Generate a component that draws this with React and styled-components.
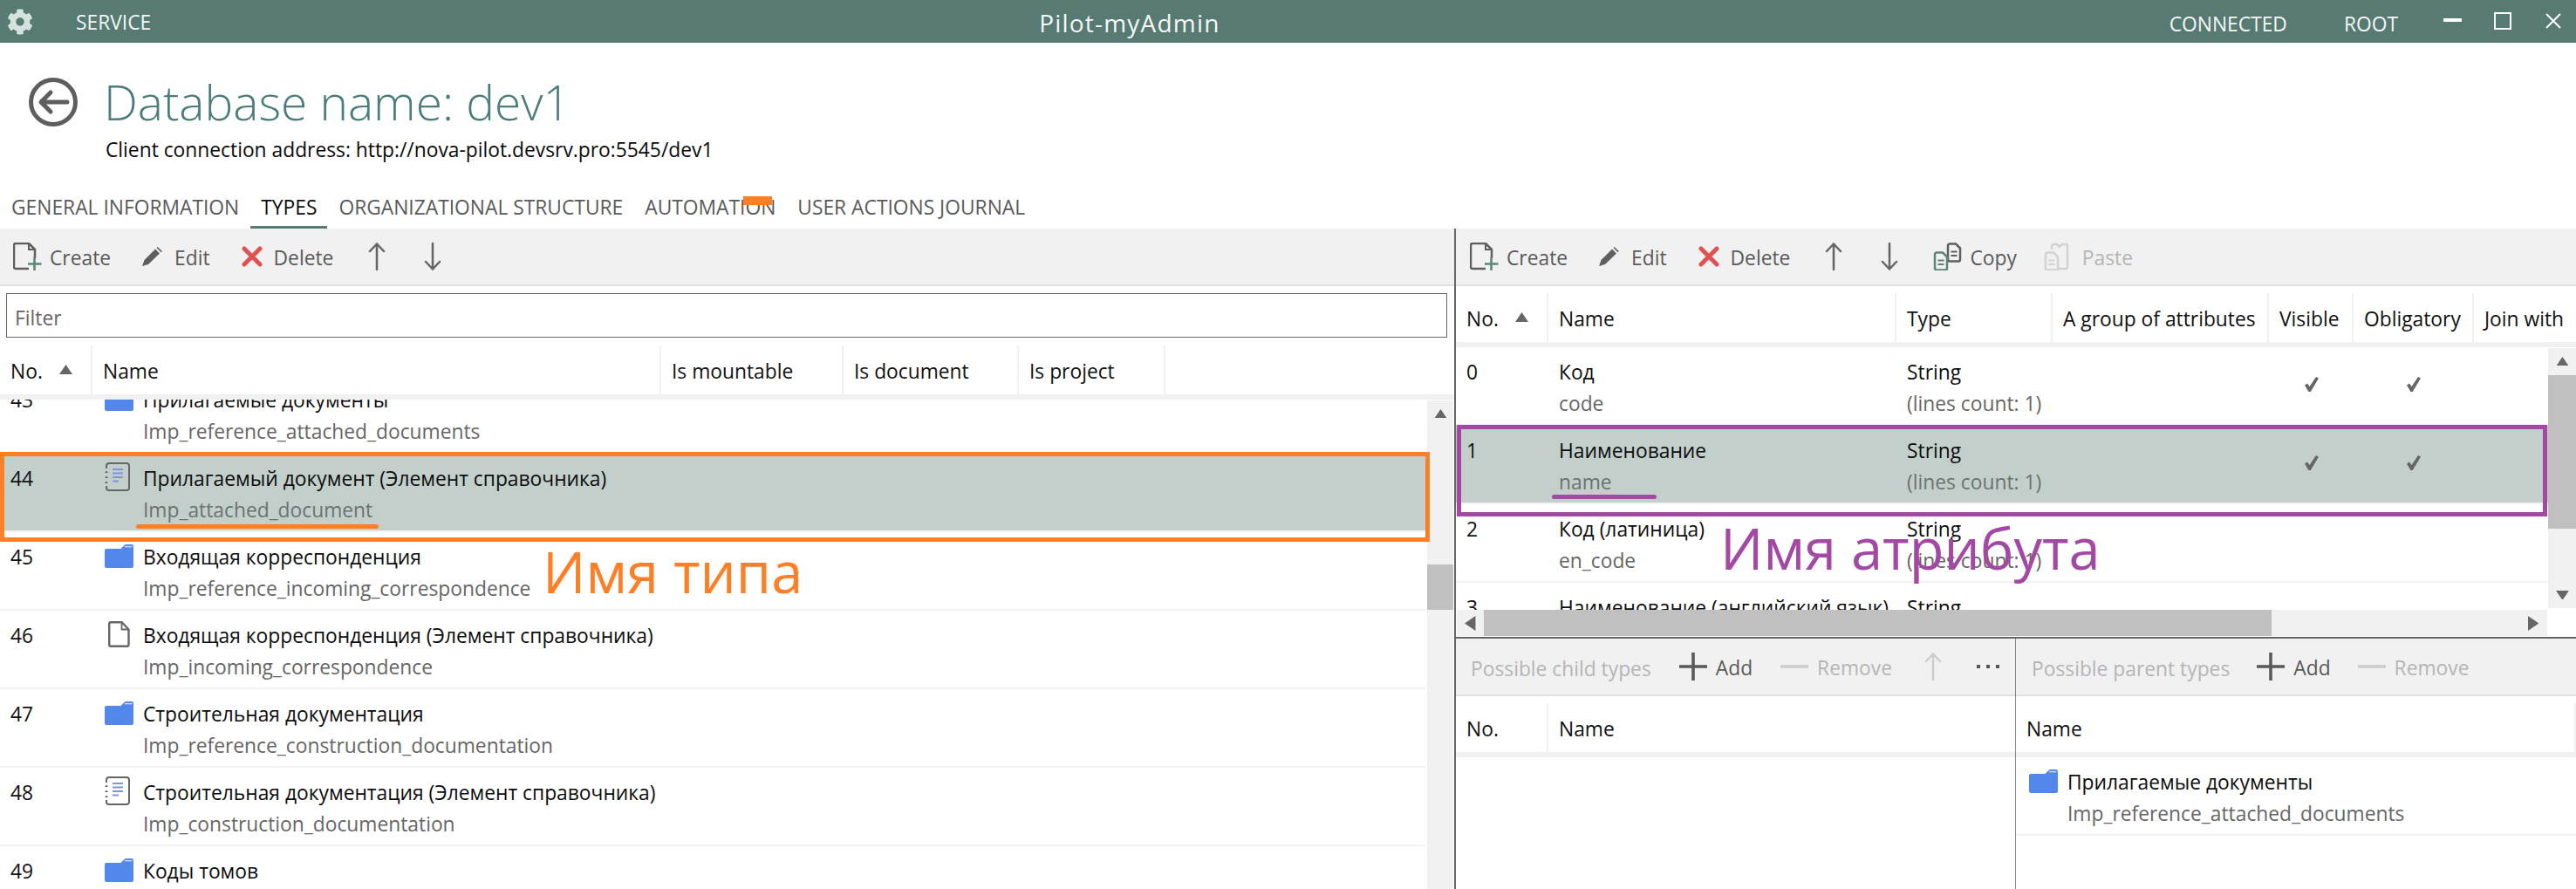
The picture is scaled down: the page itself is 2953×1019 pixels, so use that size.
import React from 'react';
import styled, { createGlobalStyle } from 'styled-components';
import { FaCog } from 'react-icons/fa';

const FONT = `"Open Sans", "Noto Sans", sans-serif`;
const GREEN = '#577b72';
const STRIP = '#f1f1f1';
const HILITE = '#c2cfcb';

const Global = createGlobalStyle`
  html, body { margin: 0; padding: 0; background: #fff; }
  body { font-family: ${FONT}; font-size: 22.8px; color: #111; overflow: hidden; }
  * { box-sizing: border-box; }
`;

const Page = styled.div`position: relative; width: 2953px; height: 1019px; overflow: hidden; display: flex; flex-direction: column;`;

const TitleBar = styled.header`
  height: 49px; flex: none; background: ${GREEN}; color: #fff; display: flex; align-items: center; padding-left: 8px;
`;
const BarText = styled.span`line-height: 30px; margin-left: ${p => p.$ml || 0}px; padding-top: ${p => p.$pt || 0}px; color: #f4f7f6; white-space: nowrap;`;
const AppName = styled(BarText)`font-size: 28px; letter-spacing: 1.2px;`;
const RightGroup = styled.div`margin-left: auto; display: flex; align-items: center;`;
const WinBox = styled.span`width: 20px; height: 20px; border: 2.5px solid #fff; margin-left: 37px; margin-top: -2px;`;
const WinMin = styled.span`width: 21px; height: 4px; background: #fff; margin-left: 52px; margin-top: -4px;`;
const WinClose = styled.svg`width: 18px; height: 18px; margin-left: 39px; margin-right: 17px; margin-top: -2px;`;

const TitleRow = styled.div`display: flex; align-items: center; gap: 30px; height: 56px; margin: 40px 0 0 33px; flex: none;`;
const Title = styled.h1`margin: 0; font: 300 55px/56px ${FONT}; color: #4a7d7b; white-space: nowrap;`;
const Address = styled.div`margin: 12px 0 0 121px; line-height: 30px; color: #0a0a0a; flex: none;`;

const Tabs = styled.nav`display: flex; gap: 1px; height: 50px; margin-top: 25px; padding-left: 1px; flex: none;`;
const Tab = styled.div`
  padding: 11px 12px 0; line-height: 30px; height: 50px; white-space: nowrap;
  color: ${p => (p.$active ? '#0c0c0c' : '#5a5a5a')};
  border-bottom: 3px solid ${p => (p.$active ? GREEN : 'transparent')};
`;

const Main = styled.main`flex: 1; display: flex; min-height: 0;`;
const LeftPane = styled.section`width: 1669px; flex: none; border-right: 2px solid #666; display: flex; flex-direction: column; min-height: 0;`;
const RightPane = styled.section`flex: 1; display: flex; flex-direction: column; min-width: 0;`;

const Toolbar = styled.div`
  height: 66px; flex: none; background: ${STRIP}; border-bottom: 2px solid #e0e0e0; display: flex; align-items: center; gap: ${p => p.$gap || 36}px;
  padding-left: ${p => p.$pl || 15}px; white-space: nowrap; overflow: hidden;
`;
const ToolButton = styled.div`display: flex; align-items: center; gap: ${p => p.$gap || 9}px; color: ${p => (p.$off ? '#b5b5b5' : '#5a5a5a')}; line-height: 30px;`;
const ToolText = styled.span`padding-top: 4px;`;
const ToolLabel = styled.span`color: #b5b5b5; padding-top: 4px;`;
const IconBox = styled.span`display: flex; align-items: center; width: ${p => p.$w}px; height: 32px; justify-content: ${p => p.$center ? 'center' : 'flex-start'};`;
const PasteSlot = styled(ToolButton)`margin-left: -5px; gap: 12px;`;

const FilterWrap = styled.div`padding: 8px 8px 9px 7px; flex: none;`;
const FilterBox = styled.div`height: 51px; border: 1.5px solid #666; padding: 4px 0 0 9px; line-height: 48px; color: #666;`;

const Grid = styled.div`display: grid; grid-template-columns: ${p => p.$cols};`;
const HeadRow = styled(Grid)`height: 62px; flex: none; border-bottom: 6px solid ${STRIP}; overflow: hidden; background: #fff;`;
const HeadCell = styled.div`
  position: relative; padding: 2px 0 0 12px; line-height: 56px; color: #111; white-space: nowrap; overflow: hidden;
  border-right: 2px solid ${p => (p.$last ? 'transparent' : STRIP)};
`;
const SortMark = styled.svg`position: absolute; left: 68px; top: 22px; width: 15px; height: 11px;`;

const ScrollArea = styled.div`flex: 1; display: flex; min-height: 0;`;
const List = styled.div`flex: 1; overflow: hidden; min-width: 0;`;
const ListInner = styled.div`margin-top: ${p => p.$offset || 0}px;`;
const VScroll = styled.div`
  width: ${p => p.$w}px; flex: none; background: ${STRIP}; display: flex; flex-direction: column; align-items: center;
  margin: ${p => p.$margin || '0'};
`;
const ArrowSlot = styled.div`height: 30px; flex: none; display: flex; align-items: center; justify-content: center; margin-top: ${p => p.$auto ? 'auto' : 0};`;
const VThumb = styled.div`width: 100%; background: #c0c0c0; flex: none;`;

const Row = styled(Grid)`
  height: 90px; border-bottom: 2px solid ${STRIP}; background: ${p => (p.$selected ? HILITE : '#fff')};
`;
const NumCell = styled.div`padding: 14px 0 0 12px; line-height: 30px; color: #111;`;
const TypeCell = styled.div`display: flex; padding: 14px 0 0 15px; min-width: 0; white-space: nowrap;`;
const IconSlot = styled.div`width: 44px; flex: none; height: 30px; display: flex; align-items: flex-start;`;
const Lines = styled.div`padding: ${p => p.$pad || 0}; min-width: 0; white-space: nowrap;`;
const Primary = styled.div`line-height: 30px; color: #0d0d0d;`;
const Secondary = styled.div`line-height: 30px; margin-top: 6px; color: ${p => p.$sel ? '#6b7371' : '#666'};`;
const CheckCell = styled.div`display: flex; align-items: center; justify-content: center; padding-bottom: 4px;`;

const HScroll = styled.div`height: 31px; flex: none; background: #fff; display: flex; padding: 0 33px 1px 1px;`;
const HTrack = styled.div`flex: 1; background: ${STRIP}; display: flex; align-items: center;`;
const HArrow = styled.div`width: 31px; flex: none; display: flex; justify-content: center;`;
const HThumb = styled.div`height: 100%; flex: none; background: #c0c0c0;`;
const HRest = styled.div`flex: 1;`;

const TopPane = styled.div`height: 470px; flex: none; display: flex; flex-direction: column; border-bottom: 2px solid #666;`;
const HeadGap = styled.div`height: 8px; flex: none;`;
const BottomPane = styled.div`flex: 1; display: flex; min-height: 0;`;
const SubPane = styled.div`flex: ${p => p.$flex}; width: ${p => p.$w}px; border-right: ${p => p.$line ? '1px solid #888' : 'none'}; display: flex; flex-direction: column; min-width: 0;`;
const SubHead = styled(HeadRow)``;

const Note = styled.div`
  position: absolute; left: ${p => p.$x}px; top: ${p => p.$y}px; color: ${p => p.$color}; font: 400 65px/90px ${FONT}; white-space: nowrap;
`;
const Frame = styled.div`
  position: absolute; left: ${p => p.$x}px; top: ${p => p.$y}px; width: ${p => p.$w}px; height: ${p => p.$h}px; border: 5px solid ${p => p.$color};
`;
const Stroke = styled.div`
  position: absolute; left: ${p => p.$x}px; top: ${p => p.$y}px; width: ${p => p.$w}px; height: ${p => p.$h}px; border-radius: 3px; background: ${p => p.$color};
`;
const Tag = styled(Stroke)`border-radius: 0;`;

const I = '#5f5f5f';
const DocAdd = () => (
  <svg width="33" height="32" viewBox="0 0 33 32" fill="none">
    <path d="M18 30H3a2 2 0 0 1-2-2V3a2 2 0 0 1 2-2h15l7 7v10" stroke={I} strokeWidth="2.5" strokeLinejoin="round" />
    <path d="M18 1v7h7" stroke={I} strokeWidth="2" fill="none" />
    <path d="M24.5 17v15M17 24.5h15.5" stroke="#5c8578" strokeWidth="2.6" />
  </svg>
);
const Pencil = () => (
  <svg width="24" height="22" viewBox="0 0 24 22"><path d="M0 22l2.5-7L15 2.5 20 7.5 7 20zM16.5 1l1.2-1 5.2 5-1.2 1.3z" fill={I} /></svg>
);
const Cross = () => (
  <svg width="24" height="24" viewBox="0 0 24 24"><path d="M3 3l18 18M21 3L3 21" stroke="#e05252" strokeWidth="5" strokeLinecap="round" /></svg>
);
const ArrowV = ({ down, color = '#666' }) => (
  <svg width="20" height="32" viewBox="0 0 20 32" fill="none" style={{ transform: down ? 'scaleY(-1)' : 'none' }}>
    <path d="M10 31V1.5M2 10L10 1.5 18 10" stroke={color} strokeWidth="2.5" strokeLinecap="round" strokeLinejoin="round" />
  </svg>
);
const MiniDoc = ({ x, y, c }) => (
  <g transform={`translate(${x} ${y})`}>
    <path d="M1.5 3a2 2 0 0 1 2-2h7l5 5v13a2 2 0 0 1-2 2h-10a2 2 0 0 1-2-2z" fill="none" stroke={c} strokeWidth="2.5" strokeLinejoin="round" />
    <path d="M5 10h7M5 14.5h7" stroke={c} strokeWidth="2" />
  </g>
);
const CopyIcon = () => (
  <svg width="33" height="32" viewBox="0 0 33 32">
    <MiniDoc x={15.5} y={0.5} c="#5f5f5f" />
    <MiniDoc x={0.5} y={10.5} c="#5c8578" />
  </svg>
);
const PasteIcon = () => (
  <svg width="32" height="32" viewBox="0 0 32 32" fill="none">
    <path d="M9 8V4a2 2 0 0 1 2-2h4l3 3 3-3h4a2 2 0 0 1 2 2v24a2 2 0 0 1-2 2H15" stroke="#d2d2d2" strokeWidth="2.4" />
    <MiniDoc x={0.5} y={10.5} c="#d2d2d2" />
  </svg>
);
const Plus = () => (
  <svg width="32" height="32" viewBox="0 0 32 32"><path d="M16 0v32M0 16h32" stroke="#5a5a5a" strokeWidth="3.6" /></svg>
);
const Minus = () => (
  <svg width="32" height="32" viewBox="0 0 32 32"><path d="M0 16h32" stroke="#cdcdcd" strokeWidth="3.6" /></svg>
);
const Dots = () => (
  <svg width="26" height="6" viewBox="0 0 26 6"><path d="M0 1h4v4H0zM11 1h4v4h-4zM22 1h4v4h-4z" fill="#555" /></svg>
);
const Tri = ({ d, size = 15 }) => {
  const paths = { up: 'M7.5 0L15 11H0z', down: 'M0 0h15L7.5 11z', left: 'M11 0v15L0 7.5z', right: 'M0 0v15l11-7.5z' };
  const side = d === 'left' || d === 'right';
  return (
    <svg width={side ? size * 0.73 : size} height={side ? size : size * 0.73} viewBox={side ? '0 0 11 15' : '0 0 15 11'}>
      <path d={paths[d]} fill="#666" />
    </svg>
  );
};
const Check = () => (
  <svg width="16" height="17" viewBox="0 0 16 17"><path d="M0 9.5l3-2 2.6 3.6L13 0l3 1.4L6.8 17H4.4z" fill="#666" /></svg>
);
const Folder = () => (
  <svg width="33" height="27" viewBox="0 0 33 27">
    <path d="M0 7a2 2 0 0 1 2-2h16.5l4.2-4.2A2.5 2.5 0 0 1 24.5 0H31a2 2 0 0 1 2 2v23a2 2 0 0 1-2 2H2a2 2 0 0 1-2-2z" fill="#5288ec" />
    <path d="M23 2.6h8.4" stroke="#cfdcf7" strokeWidth="1.4" />
  </svg>
);
const ListDoc = () => (
  <svg width="29" height="33" viewBox="0 0 29 33" fill="none" style={{ marginTop: -4 }}>
    <path d="M2 7V4a3 3 0 0 1 3-3h20a3 3 0 0 1 3 3v25a3 3 0 0 1-3 3H5a3 3 0 0 1-3-3v-2" stroke="#666" strokeWidth="2" />
    <path d="M9 8h12M9 12.5h12M9 17h12M9 21.5h7" stroke="#7f95d6" strokeWidth="2" />
    <path d="M0 12l2-2.5L4 12zM0 18l2-2.5L4 18zM0 24l2-2.5L4 24z" fill="#666" />
  </svg>
);
const PlainDoc = () => (
  <svg width="26" height="30" viewBox="0 0 26 30" fill="none" style={{ marginLeft: 4, marginTop: -2 }}>
    <path d="M3 1.2h12.5l8 8.3V27a1.8 1.8 0 0 1-1.8 1.8H3A1.8 1.8 0 0 1 1.2 27V3A1.8 1.8 0 0 1 3 1.2z" stroke="#666" strokeWidth="2.4" strokeLinejoin="round" />
    <path d="M15.5 1.2v8.3h8" stroke="#666" strokeWidth="1.8" />
  </svg>
);
const ICONS = { folder: Folder, list: ListDoc, doc: PlainDoc };

const TYPE_COLS = '106px 652px 209px 201px 168px 1fr';
const typeHead = ['No.', 'Name', 'Is mountable', 'Is document', 'Is project'];
const typeRows = [
  { n: 43, icon: 'folder', name: 'Прилагаемые документы', sys: 'Imp_reference_attached_documents' },
  { n: 44, icon: 'list', name: 'Прилагаемый документ (Элемент справочника)', sys: 'Imp_attached_document', selected: true },
  { n: 45, icon: 'folder', name: 'Входящая корреспонденция', sys: 'Imp_reference_incoming_correspondence' },
  { n: 46, icon: 'doc', name: 'Входящая корреспонденция (Элемент справочника)', sys: 'Imp_incoming_correspondence' },
  { n: 47, icon: 'folder', name: 'Строительная документация', sys: 'Imp_reference_construction_documentation' },
  { n: 48, icon: 'list', name: 'Строительная документация (Элемент справочника)', sys: 'Imp_construction_documentation' },
  { n: 49, icon: 'folder', name: 'Коды томов', sys: '' },
];

const ATTR_COLS = '106px 399px 179px 248px 97px 138px 1fr';
const attrHead = ['No.', 'Name', 'Type', 'A group of attributes', 'Visible', 'Obligatory', 'Join with'];
const attrRows = [
  { n: 0, name: 'Код', sys: 'code', checks: true },
  { n: 1, name: 'Наименование', sys: 'name', checks: true, selected: true },
  { n: 2, name: 'Код (латиница)', sys: 'en_code' },
  { n: 3, name: 'Наименование (английский язык)', sys: 'en_name' },
];

const TopTools = ({ pl, extra }) => (
  <Toolbar $pl={pl}>
    <ToolButton><IconBox $w={33}><DocAdd /></IconBox><ToolText>Create</ToolText></ToolButton>
    <ToolButton><IconBox $w={28}><Pencil /></IconBox><ToolText>Edit</ToolText></ToolButton>
    <ToolButton><IconBox $w={28}><Cross /></IconBox><ToolText>Delete</ToolText></ToolButton>
    <IconBox $w={28} $center><ArrowV /></IconBox>
    <IconBox $w={28} $center><ArrowV down /></IconBox>
    {extra}
  </Toolbar>
);

export default function App() {
  return (
    <Page>
      <Global />
      <TitleBar>
        <FaCog size={30} color="#d5e2dd" />
        <BarText $ml={49} $pt={2}>SERVICE</BarText>
        <AppName $ml={1018} $pt={2}>Pilot-myAdmin</AppName>
        <RightGroup>
          <BarText $pt={6}>CONNECTED</BarText>
          <BarText $ml={65} $pt={6}>ROOT</BarText>
          <WinMin />
          <WinBox />
          <WinClose viewBox="0 0 18 18"><path d="M1 1l16 16M17 1L1 17" stroke="#fff" strokeWidth="2" /></WinClose>
        </RightGroup>
      </TitleBar>

      <TitleRow>
        <svg width="56" height="56" viewBox="0 0 56 56" fill="none">
          <circle cx="28" cy="28" r="25.5" stroke="#5e5e5e" strokeWidth="5" />
          <path d="M44 28H15M25 17L14 28l11 11" stroke="#5e5e5e" strokeWidth="5" strokeLinejoin="round" strokeLinecap="round" />
        </svg>
        <Title>Database name: dev1</Title>
      </TitleRow>
      <Address>Client connection address: http://nova-pilot.devsrv.pro:5545/dev1</Address>

      <Tabs>
        <Tab>GENERAL INFORMATION</Tab>
        <Tab $active>TYPES</Tab>
        <Tab>ORGANIZATIONAL STRUCTURE</Tab>
        <Tab>AUTOMATION</Tab>
        <Tab>USER ACTIONS JOURNAL</Tab>
      </Tabs>

      <Main>
        <LeftPane>
          <TopTools pl={15} />
          <FilterWrap><FilterBox>Filter</FilterBox></FilterWrap>
          <HeadRow $cols={TYPE_COLS}>
            {typeHead.map(h => <HeadCell key={h}>{h}{h === 'No.' && <SortMark viewBox="0 0 15 11"><path d="M7.5 0L15 11H0z" fill="#666" /></SortMark>}</HeadCell>)}
            <HeadCell $last />
          </HeadRow>
          <ScrollArea>
            <List>
              <ListInner $offset={-28}>
                {typeRows.map(r => {
                  const Ico = ICONS[r.icon];
                  return (
                    <Row key={r.n} $cols="105px 1fr" $selected={r.selected}>
                      <NumCell>{r.n}</NumCell>
                      <TypeCell>
                        <IconSlot><Ico /></IconSlot>
                        <Lines>
                          <Primary>{r.name}</Primary>
                          <Secondary $sel={r.selected}>{r.sys}</Secondary>
                        </Lines>
                      </TypeCell>
                    </Row>
                  );
                })}
              </ListInner>
            </List>
            <VScroll $w={30} $margin="1px 1px 0 2px">
              <ArrowSlot><Tri d="up" /></ArrowSlot>
              <VThumb style={{ marginTop: 158, height: 52 }} />
            </VScroll>
          </ScrollArea>
        </LeftPane>

        <RightPane>
          <TopPane>
            <TopTools
              pl={16}
              extra={<>
                <ToolButton><IconBox $w={33}><CopyIcon /></IconBox><ToolText>Copy</ToolText></ToolButton>
                <PasteSlot $off><IconBox $w={32}><PasteIcon /></IconBox><ToolText>Paste</ToolText></PasteSlot>
              </>}
            />
            <HeadGap />
            <HeadRow $cols={ATTR_COLS}>
              {attrHead.map((h, i) => <HeadCell key={h} $last={i === 6}>{h}{h === 'No.' && <SortMark viewBox="0 0 15 11"><path d="M7.5 0L15 11H0z" fill="#666" /></SortMark>}</HeadCell>)}
            </HeadRow>
            <ScrollArea>
              <List>
                {attrRows.map(r => (
                  <Row key={r.n} $cols={ATTR_COLS} $selected={r.selected}>
                    <NumCell>{r.n}</NumCell>
                    <Lines $pad="14px 0 0 12px">
                      <Primary>{r.name}</Primary>
                      <Secondary $sel={r.selected}>{r.sys}</Secondary>
                    </Lines>
                    <Lines $pad="14px 0 0 12px">
                      <Primary>String</Primary>
                      <Secondary $sel={r.selected}>(lines count: 1)</Secondary>
                    </Lines>
                    <div />
                    <CheckCell>{r.checks && <Check />}</CheckCell>
                    <CheckCell>{r.checks && <Check />}</CheckCell>
                    <div />
                  </Row>
                ))}
              </List>
              <VScroll $w={32} $margin="1px 0 2px 0">
                <ArrowSlot><Tri d="up" /></ArrowSlot>
                <VThumb style={{ marginTop: 1, height: 176 }} />
                <ArrowSlot $auto><Tri d="down" /></ArrowSlot>
              </VScroll>
            </ScrollArea>
            <HScroll>
              <HTrack>
                <HArrow><Tri d="left" size={17} /></HArrow>
                <HThumb style={{ width: 903 }} />
                <HRest />
                <HArrow><Tri d="right" size={17} /></HArrow>
              </HTrack>
            </HScroll>
          </TopPane>

          <BottomPane>
            <SubPane $w={642} $flex="none" $line>
              <Toolbar $gap={32} $pl={17}>
                <ToolLabel>Possible child types</ToolLabel>
                <ToolButton $gap={10}><IconBox $w={32}><Plus /></IconBox><ToolText>Add</ToolText></ToolButton>
                <ToolButton $off $gap={10}><IconBox $w={32}><Minus /></IconBox><ToolText>Remove</ToolText></ToolButton>
                <IconBox $w={30} $center><ArrowV color="#cdcdcd" /></IconBox>
                <IconBox $w={32} $center><Dots /></IconBox>
              </Toolbar>
              <HeadGap />
              <SubHead $cols="106px 1fr">
                <HeadCell>No.</HeadCell>
                <HeadCell $last>Name</HeadCell>
              </SubHead>
            </SubPane>
            <SubPane $flex="1">
              <Toolbar $gap={31} $pl={18}>
                <ToolLabel>Possible parent types</ToolLabel>
                <ToolButton $gap={10}><IconBox $w={32}><Plus /></IconBox><ToolText>Add</ToolText></ToolButton>
                <ToolButton $off $gap={10}><IconBox $w={32}><Minus /></IconBox><ToolText>Remove</ToolText></ToolButton>
              </Toolbar>
              <HeadGap />
              <SubHead $cols="1fr">
                <HeadCell>Name</HeadCell>
              </SubHead>
              <Row $cols="1fr">
                <TypeCell>
                  <IconSlot><Folder /></IconSlot>
                  <Lines>
                    <Primary>Прилагаемые документы</Primary>
                    <Secondary>Imp_reference_attached_documents</Secondary>
                  </Lines>
                </TypeCell>
              </Row>
            </SubPane>
          </BottomPane>
        </RightPane>
      </Main>

      <Tag $x={852} $y={225} $w={33} $h={10} $color="#ff7f27" />
      <Frame $x={0} $y={518} $w={1639} $h={103} $color="#ff7f27" />
      <Stroke $x={156} $y={601} $w={278} $h={5} $color="#ff7f27" />
      <Note $x={622} $y={610} $color="#ff7f27">Имя типа</Note>
      <Frame $x={1670} $y={487} $w={1250} $h={105} $color="#a349a4" />
      <Stroke $x={1779} $y={567} $w={120} $h={5} $color="#a349a4" />
      <Note $x={1972} $y={583} $color="#a349a4">Имя атрибута</Note>
    </Page>
  );
}
